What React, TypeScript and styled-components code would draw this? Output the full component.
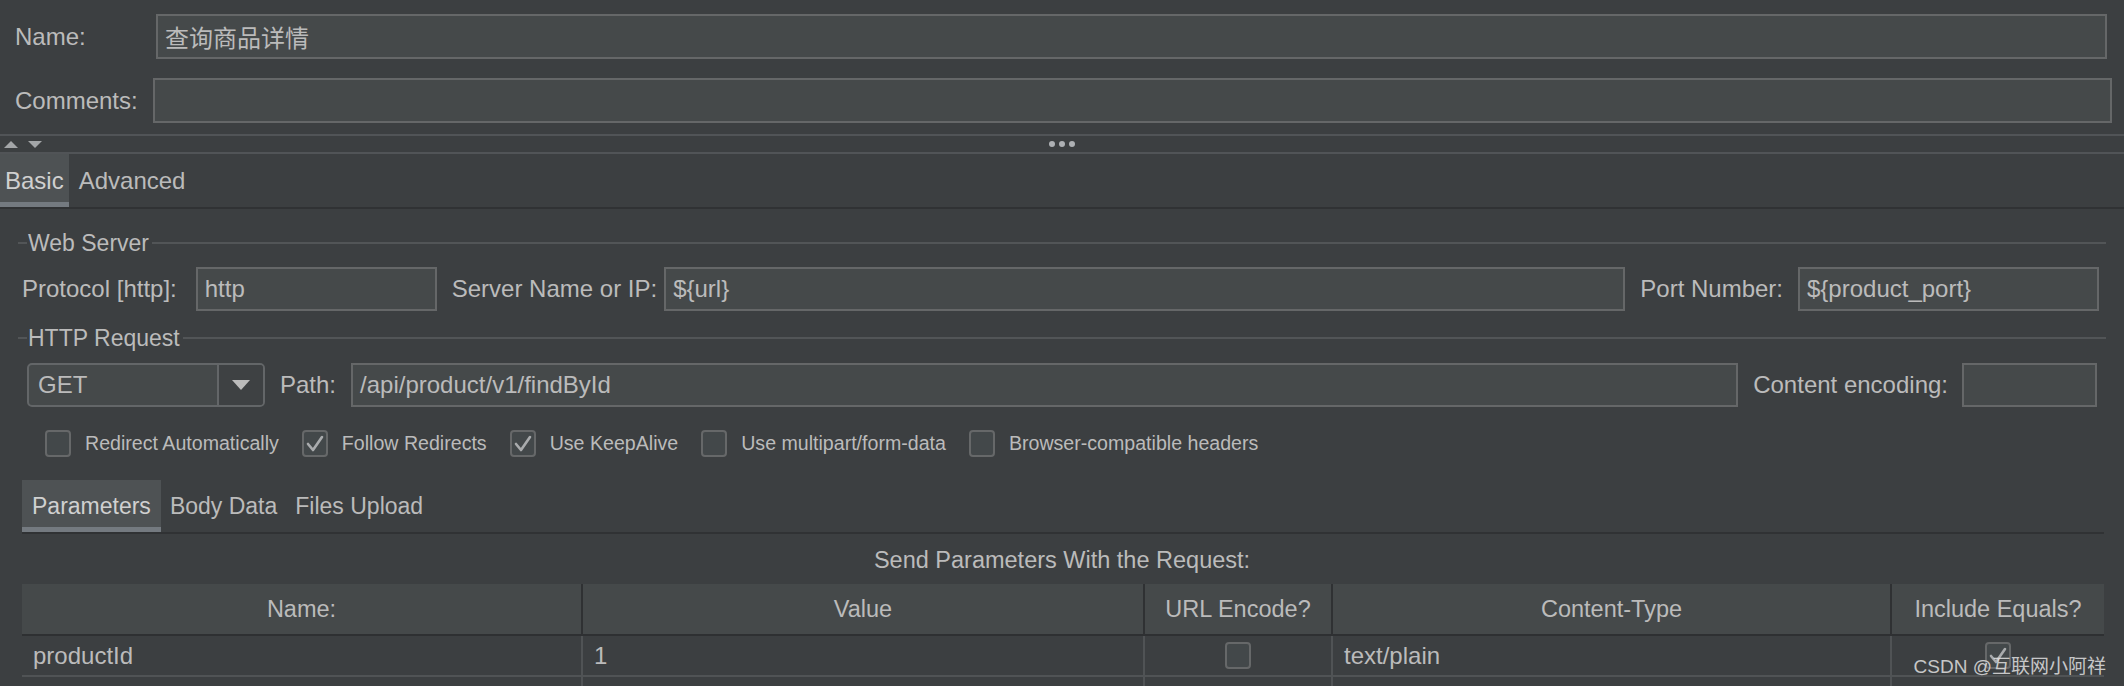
import React from "react";
import styled, { createGlobalStyle } from "styled-components";

const GlobalStyle = createGlobalStyle`
  html, body { margin: 0; padding: 0; background: #3c3f41; }
  body {
    font-family: "Liberation Sans", "Noto Sans CJK SC", sans-serif;
    color: #bbbbbb;
  }
  * { box-sizing: border-box; }
`;

const Page = styled.div`
  position: relative;
  width: 2124px;
  height: 686px;
  overflow: hidden;
  background: #3c3f41;
  display: flex;
  flex-direction: column;
  & > * {
    flex-shrink: 0;
  }
`;

const Header = styled.div`
  display: flex;
  flex-direction: column;
  gap: 19px;
  padding: 14px 0 11px 15px;
`;

const FieldRow = styled.div<{ $right: number }>`
  display: flex;
  align-items: center;
  padding-right: ${(p) => p.$right}px;
`;

const FieldLabel = styled.div<{ $width?: number }>`
  flex-shrink: 0;
  ${(p) => (p.$width ? `width: ${p.$width}px;` : "")}
  font-size: 24px;
  white-space: nowrap;
  color: #bbbbbb;
`;

const TextBox = styled.div<{ $width?: number; $height?: number }>`
  ${(p) => (p.$width ? `width: ${p.$width}px; flex-shrink: 0;` : "flex: 1;")}
  height: ${(p) => p.$height ?? 44}px;
  border: 2px solid #656768;
  background: #45494a;
  padding: 0 7px;
  display: flex;
  align-items: center;
  font-size: 24px;
  color: #bbbbbb;
  white-space: nowrap;
  overflow: hidden;
`;

const Divider = styled.div`
  height: 20px;
  border-top: 2px solid #515457;
  border-bottom: 2px solid #515457;
  display: grid;
  grid-template-columns: 1fr auto 1fr;
  align-items: center;
`;

const ArrowGroup = styled.div`
  display: flex;
  align-items: center;
  gap: 10px;
  padding-left: 4px;
`;

const Dots = styled.div`
  display: flex;
  gap: 4px;
`;

const Dot = styled.span`
  width: 6px;
  height: 6px;
  border-radius: 50%;
  background: #aeb1b4;
`;

const TabBar = styled.div<{ $height: number; $inset?: string }>`
  display: flex;
  height: ${(p) => p.$height + 2}px;
  margin: ${(p) => p.$inset ?? "0"};
  border-bottom: 2px solid #303234;
`;

const Tab = styled.div<{ $active?: boolean; $size: number; $pad: number }>`
  display: flex;
  align-items: center;
  padding: 0 ${(p) => p.$pad}px;
  font-size: ${(p) => p.$size}px;
  color: ${(p) => (p.$active ? "#d0d0d0" : "#bbbbbb")};
  background: ${(p) => (p.$active ? "#4e5254" : "transparent")};
  box-shadow: ${(p) => (p.$active ? "inset 0 -5px 0 #747a80" : "none")};
  white-space: nowrap;
`;

const Panel = styled.div`
  display: flex;
  flex-direction: column;
  padding: 0 18px;
  & > * {
    flex-shrink: 0;
  }
`;

const Legend = styled.div<{ $top: number }>`
  display: flex;
  align-items: center;
  height: 24px;
  margin-top: ${(p) => p.$top}px;
  font-size: 23px;
  color: #bbbbbb;
  &::before {
    content: "";
    width: 9px;
    height: 2px;
    background: #525557;
    margin-right: 1px;
  }
  &::after {
    content: "";
    flex: 1;
    height: 2px;
    background: #525557;
    margin-left: 3px;
  }
`;

const InputRow = styled.div<{ $top: number; $left: number; $right: number }>`
  display: flex;
  align-items: center;
  gap: 15px;
  margin-top: ${(p) => p.$top}px;
  padding-left: ${(p) => p.$left}px;
  padding-right: ${(p) => p.$right}px;
`;

const Pair = styled.div<{ $gap: number; $grow?: boolean }>`
  display: flex;
  align-items: center;
  gap: ${(p) => p.$gap}px;
  ${(p) => (p.$grow ? "flex: 1;" : "")}
`;

const Combo = styled.div`
  width: 238px;
  height: 44px;
  flex-shrink: 0;
  display: flex;
  border: 2px solid #636668;
  border-radius: 5px;
  background: #45494a;
  overflow: hidden;
`;

const ComboValue = styled.div`
  flex: 1;
  display: flex;
  align-items: center;
  padding-left: 9px;
  font-size: 24px;
  color: #bbbbbb;
`;

const ComboButton = styled.div`
  width: 46px;
  border-left: 2px solid #636668;
  background: #3e4143;
  display: flex;
  align-items: center;
  justify-content: center;
`;

const CheckRow = styled.div`
  display: flex;
  align-items: center;
  gap: 23px;
  margin-top: 23px;
  padding-left: 27px;
  height: 27px;
`;

const CheckItem = styled.label`
  display: flex;
  align-items: center;
  gap: 14px;
  font-size: 19.6px;
  color: #bbbbbb;
  white-space: nowrap;
`;

const Box = styled.span`
  width: 26px;
  height: 27px;
  flex-shrink: 0;
  border: 2px solid #666869;
  border-radius: 4px;
  background: #43484a;
  display: flex;
  align-items: center;
  justify-content: center;
`;

const SubTabs = styled.div`
  margin-top: 23px;
`;

const Caption = styled.div`
  margin-top: 12px;
  height: 28px;
  line-height: 28px;
  text-align: center;
  font-size: 23.5px;
  color: #bbbbbb;
`;

const Table = styled.div`
  margin: 10px 2px 0 4px;
  display: grid;
  grid-template-columns: 561px 562px 188px 559px 1fr;
`;

const HeadCell = styled.div<{ $last?: boolean }>`
  height: 52px;
  background: #45494a;
  border-bottom: 2px solid #2e3032;
  border-right: ${(p) => (p.$last ? "none" : "2px solid #2f3133")};
  display: flex;
  align-items: center;
  justify-content: center;
  font-size: 23.5px;
  color: #bbbbbb;
`;

const Cell = styled.div<{ $last?: boolean; $center?: boolean }>`
  height: 41px;
  border-bottom: 2px solid #505355;
  border-right: ${(p) => (p.$last ? "none" : "2px solid #505355")};
  display: flex;
  align-items: center;
  justify-content: ${(p) => (p.$center ? "center" : "flex-start")};
  padding-left: ${(p) => (p.$center ? 0 : 11)}px;
  font-size: 24px;
  color: #bbbbbb;
`;

const Watermark = styled.div`
  position: absolute;
  right: 18px;
  bottom: 8px;
  font-family: "Liberation Sans", "Noto Sans CJK SC", sans-serif;
  font-size: 19px;
  color: rgba(225, 225, 225, 0.85);
  white-space: nowrap;
`;

const Check = () => (
  <svg width="20" height="18" viewBox="0 0 20 18">
    <polyline
      points="3,9 8,15 17,2"
      fill="none"
      stroke="#a9abad"
      strokeWidth="2.6"
      strokeLinecap="round"
      strokeLinejoin="round"
    />
  </svg>
);

const Tri = ({ up, w, h, color }: { up?: boolean; w: number; h: number; color: string }) => (
  <svg width={w} height={h} viewBox={`0 0 ${w} ${h}`}>
    <polygon points={up ? `0,${h} ${w / 2},0 ${w},${h}` : `0,0 ${w},0 ${w / 2},${h}`} fill={color} />
  </svg>
);

const CheckBox = ({ checked, label }: { checked?: boolean; label: string }) => (
  <CheckItem>
    <Box>{checked && <Check />}</Box>
    {label}
  </CheckItem>
);

export default function App() {
  return (
    <Page>
      <GlobalStyle />
      <Header>
        <FieldRow $right={17}>
          <FieldLabel $width={141}>Name:</FieldLabel>
          <TextBox $height={45}>查询商品详情</TextBox>
        </FieldRow>
        <FieldRow $right={12}>
          <FieldLabel $width={138}>Comments:</FieldLabel>
          <TextBox $height={45} />
        </FieldRow>
      </Header>
      <Divider>
        <ArrowGroup>
          <Tri up w={14} h={7} color="#a3a6a8" />
          <Tri w={14} h={7} color="#a3a6a8" />
        </ArrowGroup>
        <Dots>
          <Dot />
          <Dot />
          <Dot />
        </Dots>
        <span />
      </Divider>
      <TabBar $height={53}>
        <Tab $active $size={24} $pad={5}>Basic</Tab>
        <Tab $size={24} $pad={10}>Advanced</Tab>
      </TabBar>
      <Panel>
        <Legend $top={22}>Web Server</Legend>
        <InputRow $top={12} $left={4} $right={7}>
          <Pair $gap={19}>
            <FieldLabel>Protocol [http]:</FieldLabel>
            <TextBox $width={241}>http</TextBox>
          </Pair>
          <Pair $gap={7} $grow>
            <FieldLabel>Server Name or IP:</FieldLabel>
            <TextBox>{"${url}"}</TextBox>
          </Pair>
          <Pair $gap={15}>
            <FieldLabel>Port Number:</FieldLabel>
            <TextBox $width={301}>{"${product_port}"}</TextBox>
          </Pair>
        </InputRow>
        <Legend $top={15}>HTTP Request</Legend>
        <InputRow $top={13} $left={9} $right={9}>
          <Combo>
            <ComboValue>GET</ComboValue>
            <ComboButton>
              <Tri w={18} h={10} color="#bbbbbb" />
            </ComboButton>
          </Combo>
          <Pair $gap={15} $grow>
            <FieldLabel>Path:</FieldLabel>
            <TextBox>/api/product/v1/findById</TextBox>
          </Pair>
          <Pair $gap={14}>
            <FieldLabel>Content encoding:</FieldLabel>
            <TextBox $width={135} />
          </Pair>
        </InputRow>
        <CheckRow>
          <CheckBox label="Redirect Automatically" />
          <CheckBox checked label="Follow Redirects" />
          <CheckBox checked label="Use KeepAlive" />
          <CheckBox label="Use multipart/form-data" />
          <CheckBox label="Browser-compatible headers" />
        </CheckRow>
        <SubTabs>
          <TabBar $height={52} $inset="0 2px 0 4px">
            <Tab $active $size={23} $pad={10}>Parameters</Tab>
            <Tab $size={23} $pad={9}>Body Data</Tab>
            <Tab $size={23} $pad={9}>Files Upload</Tab>
          </TabBar>
        </SubTabs>
        <Caption>Send Parameters With the Request:</Caption>
        <Table>
          <HeadCell>Name:</HeadCell>
          <HeadCell>Value</HeadCell>
          <HeadCell>URL Encode?</HeadCell>
          <HeadCell>Content-Type</HeadCell>
          <HeadCell $last>Include Equals?</HeadCell>
          <Cell>productId</Cell>
          <Cell>1</Cell>
          <Cell $center>
            <Box />
          </Cell>
          <Cell>text/plain</Cell>
          <Cell $last $center>
            <Box>
              <Check />
            </Box>
          </Cell>
          <Cell />
          <Cell />
          <Cell />
          <Cell />
          <Cell $last />
        </Table>
      </Panel>
      <Watermark>CSDN @互联网小阿祥</Watermark>
    </Page>
  );
}
